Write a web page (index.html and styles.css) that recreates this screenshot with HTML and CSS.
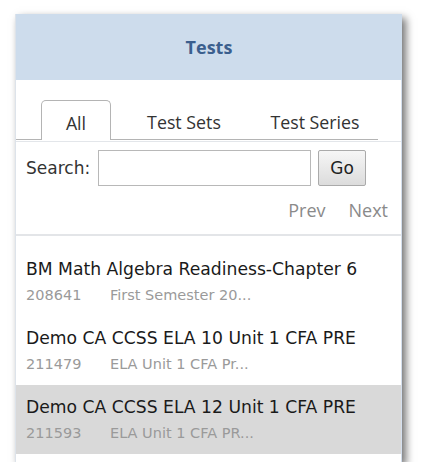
FILE: index.html
```html
<!DOCTYPE html>
<html>
<head>
<meta charset="utf-8">
<link rel="stylesheet" href="styles.css">
</head>
<body>
<div class="panel">
  <div class="header">Tests</div>
  <div class="tabs-wrap">
    <div class="tabs">
      <div class="tab active">All</div>
      <div class="tab">Test Sets</div>
      <div class="tab">Test Series</div>
    </div>
  </div>
  <div class="search">
    <label class="search-label">Search:</label>
    <input class="search-input" type="text">
    <button class="go">Go</button>
  </div>
  <div class="pager">
    <span class="pager-link">Prev</span>
    <span class="pager-link">Next</span>
  </div>
  <div class="list">
    <div class="item">
      <div class="title">BM Math Algebra Readiness-Chapter 6</div>
      <div class="sub"><span class="id">208641</span><span class="desc">First Semester 20...</span></div>
    </div>
    <div class="item">
      <div class="title">Demo CA CCSS ELA 10 Unit 1 CFA PRE</div>
      <div class="sub"><span class="id">211479</span><span class="desc">ELA Unit 1 CFA Pr...</span></div>
    </div>
    <div class="item selected">
      <div class="title">Demo CA CCSS ELA 12 Unit 1 CFA PRE</div>
      <div class="sub"><span class="id">211593</span><span class="desc">ELA Unit 1 CFA PR...</span></div>
    </div>
  </div>
</div>
</body>
</html>
```

FILE: styles.css
```css
html, body {
  margin: 0;
  padding: 0;
  background: #fff;
}
body {
  padding: 14px 0 0 15px;
}
.panel {
  width: 385px;
  height: 448px;
  background: #fff;
  border-left: 1px solid #dde3ea;
  border-right: 1px solid #d4dfee;
  box-shadow: 4px 4px 8px rgba(0, 0, 0, 0.55);
  display: flex;
  flex-direction: column;
  font-family: "DejaVu Sans", sans-serif;
}
.header {
  height: 66px;
  background: #cddcec;
  display: flex;
  align-items: center;
  justify-content: center;
  font-family: "Open Sans", sans-serif;
  font-weight: bold;
  font-size: 18px;
  color: #3b5f8e;
  margin-right: -1px;
}
.tabs-wrap {
  margin-top: 20px;
  border-bottom: 1px solid #e3e6ea;
  padding-bottom: 1px;
}
.tabs {
  height: 39px;
  display: flex;
  align-items: stretch;
  border-bottom: 1px solid #b4b4b4;
  margin-right: 23px;
  padding-left: 25px;
}
.tab {
  font-family: "Open Sans", sans-serif;
  font-size: 17.8px;
  color: #333;
  display: flex;
  align-items: center;
  justify-content: center;
  padding-top: 4px;
}
.tab.active {
  width: 68px;
  border: 1px solid #b4b4b4;
  border-bottom: none;
  border-radius: 5px 5px 0 0;
  background: #fff;
  margin-bottom: -1px;
}
.tab:nth-child(2) {
  width: 146px;
}
.tab:nth-child(3) {
  width: 116px;
}
.search {
  display: flex;
  align-items: center;
  margin-top: 8px;
  padding-left: 10px;
  height: 36px;
}
.search-label {
  font-size: 17px;
  color: #333;
  width: 72px;
}
.search-input {
  box-sizing: border-box;
  width: 213px;
  height: 36px;
  border: 1px solid #b8b8b8;
  margin: 0;
  padding: 0;
}
.go {
  box-sizing: border-box;
  margin-left: 7px;
  width: 48px;
  height: 36px;
  border: 1px solid #aaa;
  border-radius: 2px;
  background: linear-gradient(#f6f6f6, #dcdcdc);
  font-family: "DejaVu Sans", sans-serif;
  font-size: 17px;
  color: #222;
  padding: 0;
}
.pager {
  display: flex;
  justify-content: flex-end;
  gap: 23px;
  padding-right: 13px;
  height: 48px;
  align-items: center;
  border-bottom: 2px solid #e3e5e8;
}
.pager-link {
  font-family: "Open Sans", sans-serif;
  font-size: 18px;
  color: #8a8a8a;
}
.list {
  padding-top: 11px;
}
.item {
  height: 69px;
  padding-left: 10px;
  box-sizing: border-box;
  padding-top: 10px;
}
.item.selected {
  background: #d9d9d9;
}
.title {
  font-size: 17.2px;
  color: #1a1a1a;
  line-height: 24px;
}
.sub {
  font-size: 14.5px;
  color: #9a9a9a;
  line-height: 20px;
  margin-top: 4px;
  display: flex;
}
.id {
  width: 84px;
}
```
